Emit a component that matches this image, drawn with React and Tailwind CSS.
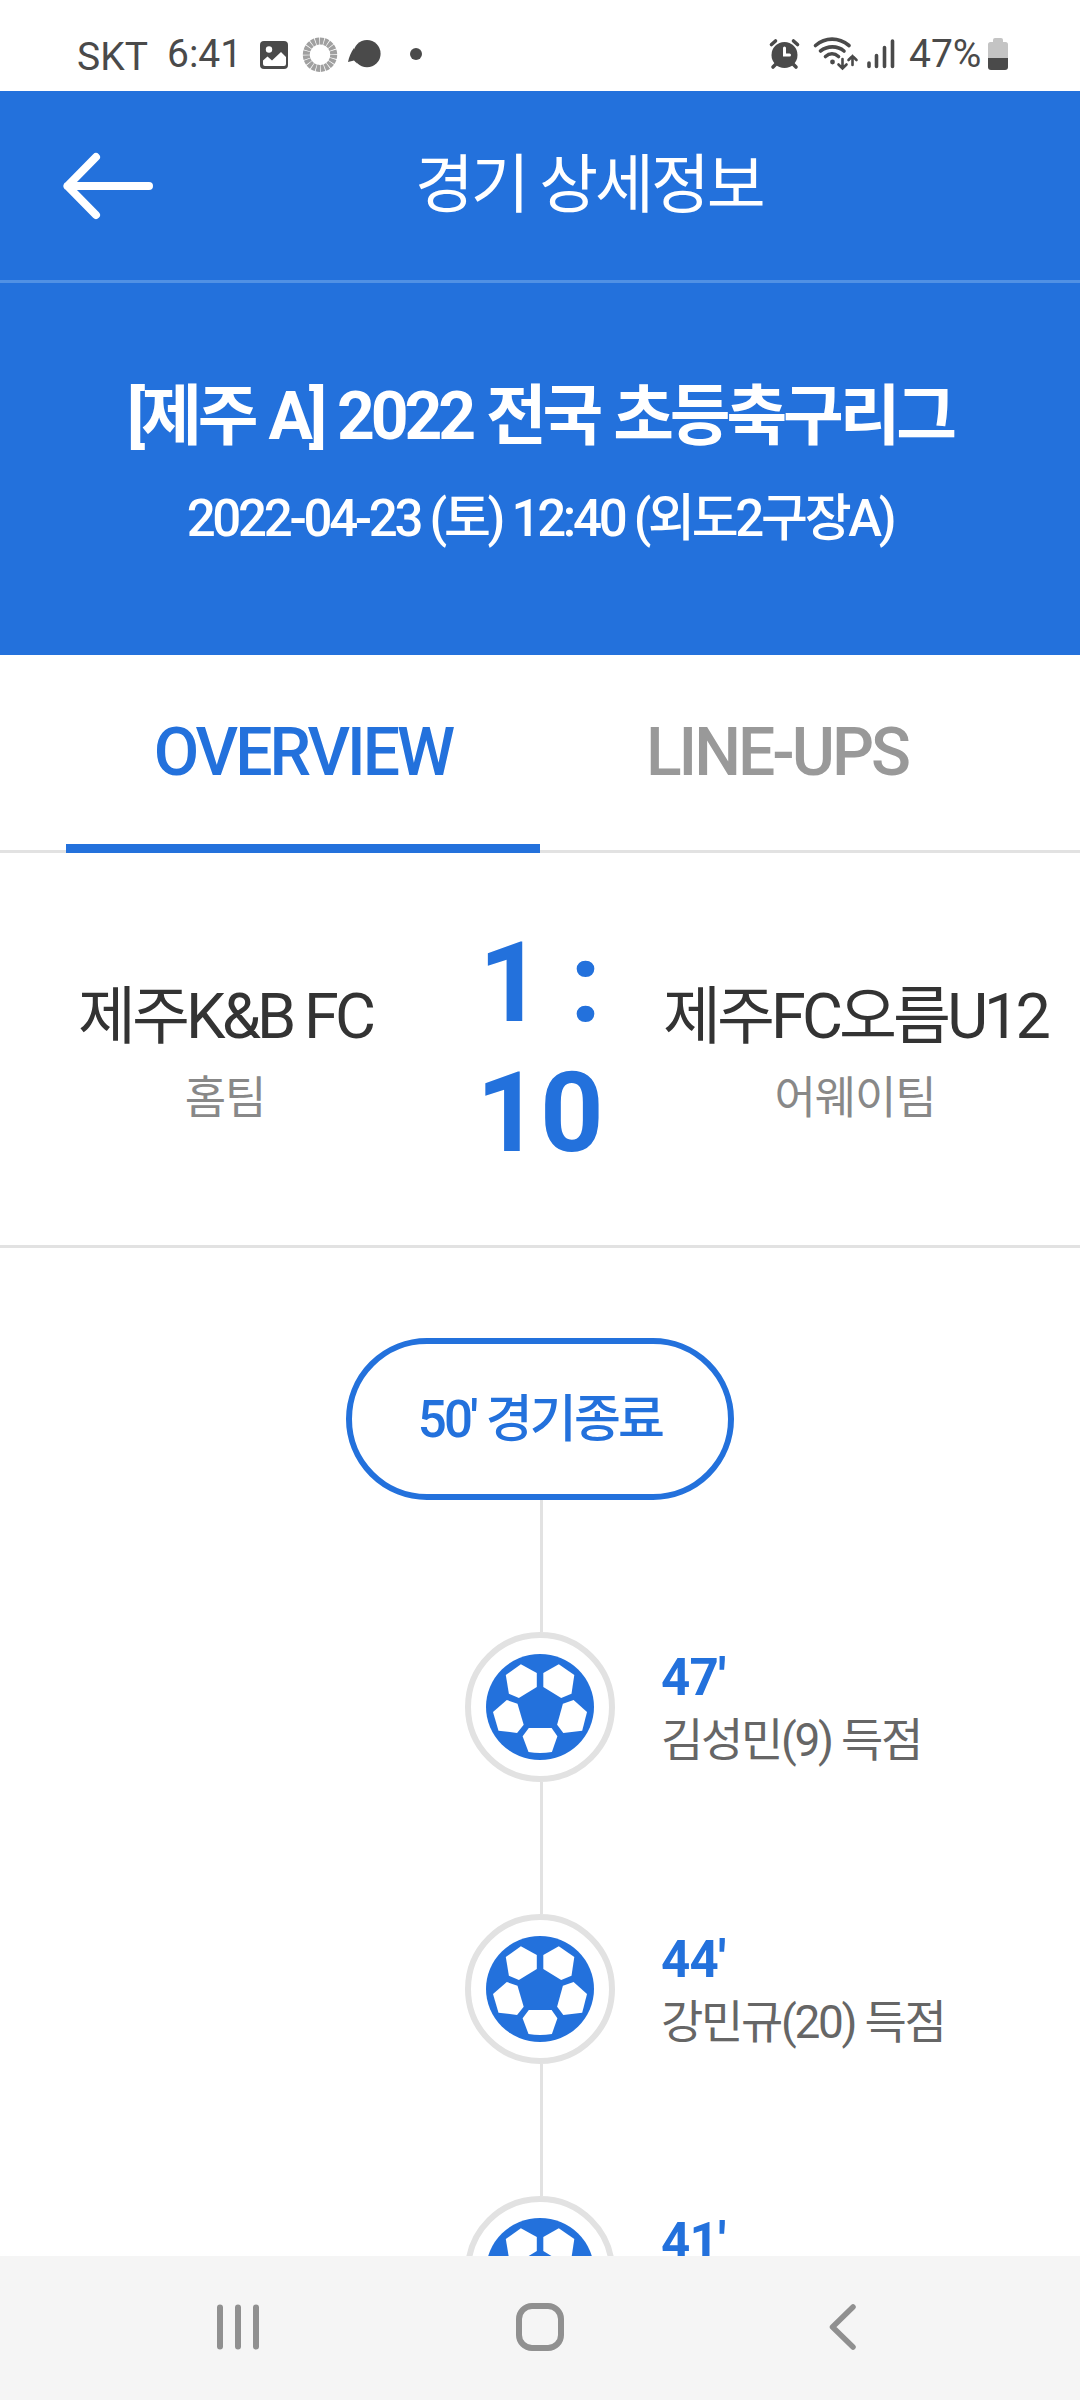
const goals = [
  { minute: "47'", text: '김성민(9) 득점' },
  { minute: "44'", text: '강민규(20) 득점' },
  { minute: "41'" },
];

function StatusBar() {
  return (
    <div className="flex h-[91px] shrink-0 items-start justify-between bg-white pr-[72px] pl-[77px] text-[39px] leading-[46px] text-[#4a4a4a]">
      <div className="flex items-start">
        <span className="mt-[34px] w-[90px]">SKT</span>
        <span className="mt-[31px] w-[87px]">6:41</span>
        <svg className="mt-[35px]" width="174" height="40" viewBox="254 35 174 40" fill="none">
          <rect x="260" y="41" width="28" height="28" rx="4" fill="#4a4a4a" />
          <circle cx="269" cy="49.5" r="3.2" fill="#fff" />
          <path d="M263 60.5l4.5-4 4.5 4 9-8.5 5 5v7a2 2 0 0 1-2 2h-19a2 2 0 0 1-2-2z" fill="#fff" />
          <circle cx="320" cy="54.7" r="13.7" stroke="#a0a0a0" strokeWidth="7" pathLength="200" strokeDasharray="8.4 1.6" />
          <circle cx="367" cy="53.7" r="13.6" fill="#4a4a4a" />
          <path d="M354 48c-3 4-5 9-6 14l6-1.500 3 3z" fill="#4a4a4a" />
          <circle cx="416" cy="54" r="6" fill="#4a4a4a" />
        </svg>
      </div>
      <div className="flex items-start">
        <svg className="mt-[35px]" width="134" height="40" viewBox="766 35 134 40" fill="none" stroke="#4a4a4a" strokeLinecap="round">
          <circle cx="784.500" cy="55" r="13" fill="#4a4a4a" stroke="none" />
          <path d="M771.500 44.500l4-3.500M797.500 44.500l-4-3.500M776 64l-3 3M793 64l3 3" strokeWidth="3.6" />
          <path d="M784.500 48v7h5" stroke="#fff" strokeWidth="3" />
          <path d="M815.500 45.500c10-8.500 23-8.500 33.500 0M820.500 51c7-5.500 17-5.500 23.500 0M825.500 56.500c4-3.500 9-3.500 13 0" strokeWidth="3.6" />
          <circle cx="832.500" cy="62" r="2.4" fill="#4a4a4a" stroke="none" />
          <path d="M842.500 59v9M838.500 64.500l4 4 4-4M852.500 65v-9M848.500 60l4-4 4 4" strokeWidth="2.600" />
          <path d="M869 63v3.500M876.500 55.500v11M884.500 47.500v19M892.500 41v25.500" strokeWidth="3.600" />
        </svg>
        <span className="mt-[31px] ml-[9px] w-[79px]">47%</span>
        <svg className="mt-[38px]" width="20" height="32" viewBox="0 0 20 32">
          <path d="M5 2q0-2 2-2h6q2 0 2 2v2h2.500q2.500 0 2.500 2.500V20H0V6.500Q0 4 2.500 4H5z" fill="#c4c4c4" />
          <path d="M0 20h20v9q0 3-3 3H3q-3 0-3-3z" fill="#4a4a4a" />
        </svg>
      </div>
    </div>
  );
}

function Header() {
  return (
    <header className="h-[564px] shrink-0 bg-[#2371dc] text-white">
      <div className="flex h-[192px] items-center border-b-[3px] border-[#5191e4] pl-[62px]">
        <svg width="92" height="68" viewBox="0 0 92 68" fill="none" stroke="currentColor" strokeWidth="8" strokeLinecap="round" strokeLinejoin="round">
          <path d="M34 5L5.500 34 34 63M5.500 34H87" />
        </svg>
        <h1 className="ml-[261px] text-[64px] leading-[76px] tracking-[-3.1px]">경기 상세정보</h1>
      </div>
      <div className="pt-[94px] text-center">
        <h2 className="text-[66px] leading-[80px] font-bold tracking-[-4.1px] [word-spacing:1.7px]">[제주 A] 2022 전국 초등축구리그</h2>
        <p className="mt-[31px] text-[51px] leading-[62px] font-medium tracking-[-3.3px]">2022-04-23 (토) 12:40 (외도2구장A)</p>
      </div>
    </header>
  );
}

function Tabs() {
  return (
    <nav className="flex h-[198px] shrink-0 border-b-[3px] border-[#e2e2e2] px-[66px] text-[66px] font-medium tracking-[-3px]">
      <button className="-mb-[3px] flex w-[474px] items-center justify-center border-b-[9px] border-[#2371dc] pt-[6px] text-[#2371dc]">
        OVERVIEW
      </button>
      <button className="flex w-[474px] items-center justify-center text-[#999]">LINE-UPS</button>
    </nav>
  );
}

function Team({ name, label }) {
  return (
    <div className="w-[450px] pt-[15px] text-center whitespace-nowrap">
      <p className="text-[63px] leading-[84px] tracking-[-3.9px] text-[#333]">{name}</p>
      <p className="text-[45px] leading-[79px] tracking-[-1.2px] text-[#888]">{label}</p>
    </div>
  );
}

function Score() {
  return (
    <section className="flex h-[395px] shrink-0 items-center border-b-[3px] border-[#e2e2e2]">
      <Team name="제주K&B FC" label="홈팀" />
      <p className="w-[180px] pb-[2px] text-center text-[111px] leading-[130px] font-bold text-[#2371dc]">1 : 10</p>
      <Team name="제주FC오름U12" label="어웨이팀" />
    </section>
  );
}

function BallIcon() {
  return (
    <svg width="108" height="106" viewBox="0 0 108 106">
      <ellipse cx="54" cy="53" rx="54" ry="53" fill="#2371dc" />
      <g fill="#fff">
        <path d="M34.900 10.300l15.900 8.700v14L32.900 44l-10-4.300L19.800 21z" />
        <path d="M72.800 10.300L88.300 21l-2.800 18.700-10.300 4.300-17.900-11V19z" />
        <path d="M20.800 46l10.700 3.700 6.200 21-6.600 8.300-18.600-2.300L7 58z" />
        <path d="M87.600 46L101 58l-4.800 18.700L77.300 79l-6.200-8.300 5.800-21z" />
        <path d="M42.800 74h22.800l5.800 8.300-5.500 15.700q-11.900 2-23.400 0l-5.900-15.700z" />
      </g>
    </svg>
  );
}

function Goal({ minute, text }) {
  return (
    <li>
      <div className="ml-[540px] h-[132px] w-[3px] bg-[#e2e2e2]" />
      <div className="flex h-[150px] items-center pl-[465px]">
        <div className="flex size-[150px] shrink-0 items-center justify-center rounded-full border-[6px] border-[#e2e2e2]">
          <BallIcon />
        </div>
        <div className="ml-[46px] h-[120px] whitespace-nowrap">
          <p className="text-[51px] leading-[62px] font-bold tracking-[-0.8px] text-[#2371dc]">{minute}</p>
          {text && <p className="text-[46px] leading-[63px] tracking-[-2.3px] text-[#666]">{text}</p>}
        </div>
      </div>
    </li>
  );
}

function NavBar() {
  return (
    <div className="flex h-[144px] shrink-0 items-center justify-between bg-[#f5f5f5] pr-[222px] pb-[2px] pl-[214px] text-[#909090]">
      <svg width="48" height="48" viewBox="0 0 48 48" stroke="currentColor" strokeWidth="6" strokeLinecap="round">
        <path d="M6 4.500v39M24 4.500v39M42 4.500v39" />
      </svg>
      <svg className="mr-[10px]" width="48" height="48" viewBox="0 0 48 48" fill="none" stroke="currentColor" strokeWidth="6">
        <rect x="3" y="3" width="42" height="42" rx="13" />
      </svg>
      <svg width="30" height="48" viewBox="0 0 30 48" fill="none" stroke="currentColor" strokeWidth="5.500" strokeLinecap="round" strokeLinejoin="round">
        <path d="M25 4L4.500 24 25 44" />
      </svg>
    </div>
  );
}

export default function App() {
  return (
    <div className="flex h-[2400px] w-[1080px] flex-col overflow-hidden bg-white font-['Roboto','Noto_Sans_CJK_KR',sans-serif]">
      <StatusBar />
      <Header />
      <Tabs />
      <Score />
      <main className="min-h-0 flex-1 overflow-hidden pt-[90px]">
        <div className="mx-auto flex h-[162px] w-[388px] items-center justify-center rounded-full border-[6px] border-[#2371dc] pt-[2px] text-[51px] leading-[62px] font-medium tracking-[-2.8px] text-[#2371dc]">
          50' 경기종료
        </div>
        <ul>
          {goals.map((goal) => (
            <Goal key={goal.minute} {...goal} />
          ))}
        </ul>
      </main>
      <NavBar />
    </div>
  );
}
